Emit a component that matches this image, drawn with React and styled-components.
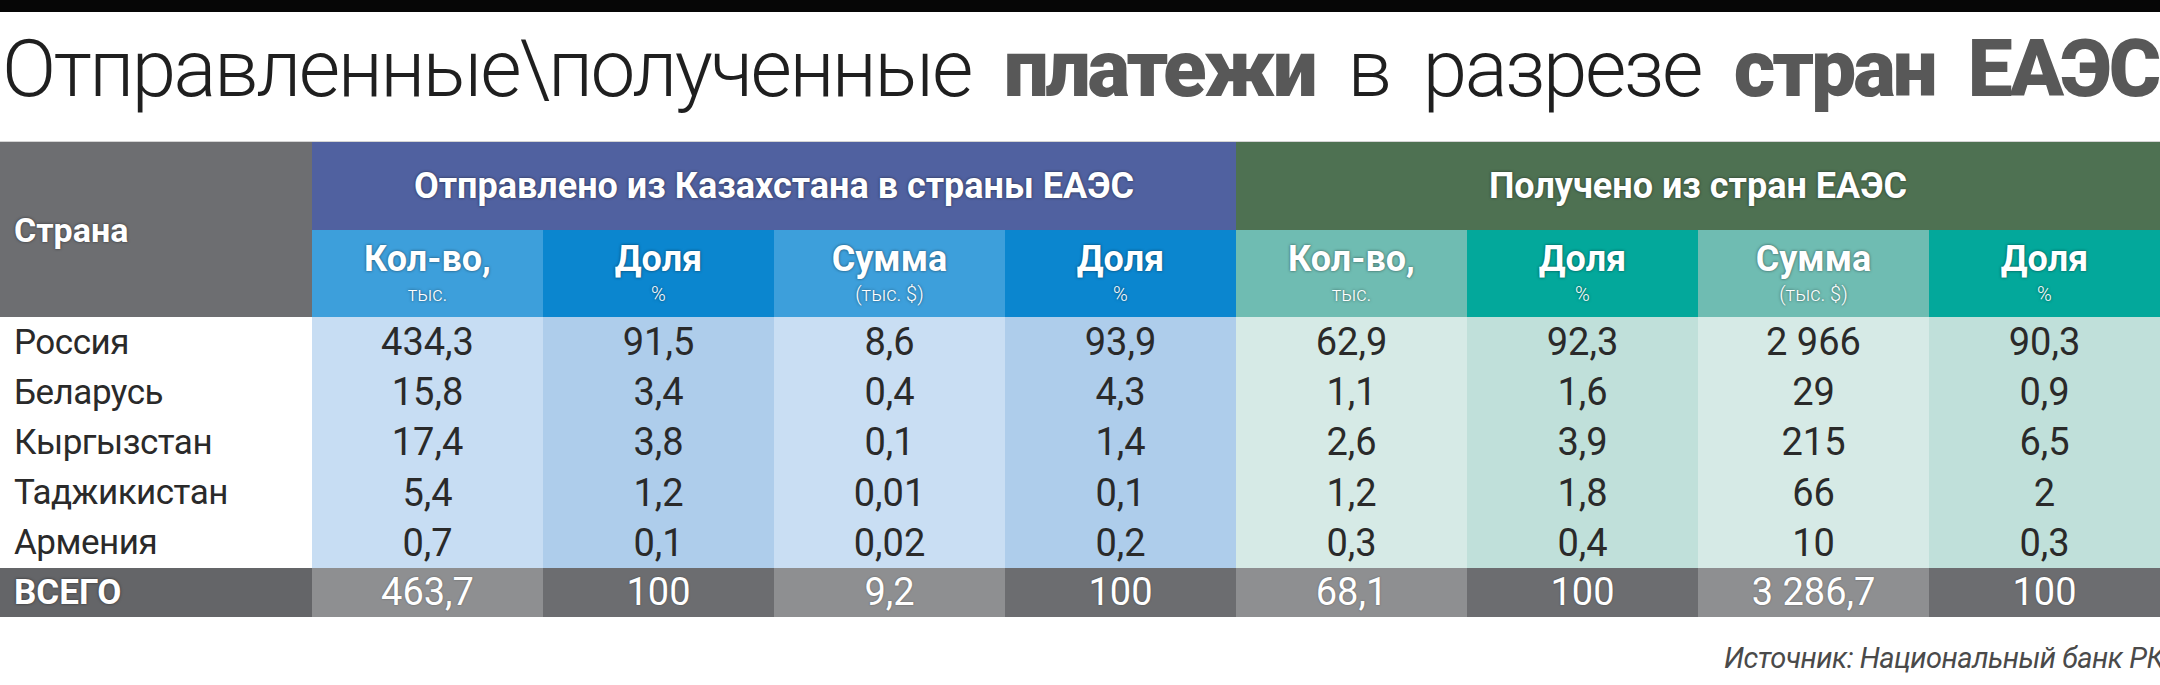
import React from 'react';
import styled, { createGlobalStyle } from 'styled-components';

const GlobalStyle = createGlobalStyle`
  html, body {
    margin: 0;
    padding: 0;
    background: #fff;
  }
  body {
    font-family: Roboto, 'Liberation Sans', sans-serif;
  }
`;

const Page = styled.div`
  width: 2160px;
  height: 685px;
  overflow: hidden;
  background: #fff;
`;

const TopBar = styled.div`
  height: 12px;
  background: #060606;
`;

const Title = styled.h1`
  margin: 0;
  height: 129px;
  box-sizing: border-box;
  padding: 17px 0 0 2px;
  font-size: 80px;
  line-height: 80px;
  font-weight: 300;
  color: #1f1f1f;
  white-space: nowrap;
  word-spacing: 16px;
  letter-spacing: -2.5px;
`;

const Strong = styled.span`
  font-weight: 900;
  color: #585858;
  letter-spacing: -3px;
`;

const Table = styled.div`
  display: grid;
  grid-template-columns: 312px repeat(8, 1fr);
  grid-template-rows: 88px 87px repeat(5, 50.2px) 49px;
  border-top: 1px solid #d4d4d4;
`;

const headText = `
  color: #fff;
  font-weight: 700;
  text-shadow: 0 0 3px rgba(0, 0, 0, 0.55);
`;

const CountryHead = styled.div`
  grid-row: 1 / 3;
  background: #6d6e71;
  display: flex;
  align-items: center;
  padding-left: 14px;
  font-size: 34px;
  ${headText}
`;

const GroupHead = styled.div`
  grid-column: span 4;
  background: ${p => p.$bg};
  display: flex;
  align-items: center;
  justify-content: center;
  font-size: 36px;
  ${headText}
`;

const SubHead = styled.div`
  background: ${p => p.$bg};
  display: flex;
  flex-direction: column;
  align-items: center;
  justify-content: center;
  gap: 5px;
  padding-bottom: 2px;
  ${headText}
`;

const SubLabel = styled.div`
  font-size: 36px;
  line-height: 38px;
`;

const SubUnit = styled.div`
  font-size: 20px;
  line-height: 22px;
  font-weight: 300;
`;

const CountryCell = styled.div`
  display: flex;
  align-items: center;
  padding-left: 14px;
  font-size: 35px;
  color: #2a2a2a;
  letter-spacing: -0.5px;
`;

const ValueCell = styled.div`
  background: ${p => p.$bg};
  display: flex;
  align-items: center;
  justify-content: center;
  font-size: 38px;
  color: #2a2a2a;
`;

const TotalLabel = styled.div`
  background: #646568;
  display: flex;
  align-items: center;
  padding-left: 14px;
  font-size: 35px;
  ${headText}
`;

const TotalCell = styled.div`
  background: ${p => p.$bg};
  display: flex;
  align-items: center;
  justify-content: center;
  font-size: 38px;
  color: #fff;
  text-shadow: 0 0 2px rgba(0, 0, 0, 0.35);
`;

const Footer = styled.div`
  display: flex;
  justify-content: flex-end;
  padding-top: 25px;
`;

const Source = styled.span`
  margin-right: -4px;
  font-size: 29px;
  line-height: 32px;
  font-style: italic;
  color: #4a4a4a;
  letter-spacing: -0.5px;
  white-space: nowrap;
`;

const columns = [
  { label: 'Кол-во,', unit: 'тыс.', head: '#3d9fdb', cell: '#c7ddf3', total: '#8e8f91' },
  { label: 'Доля', unit: '%', head: '#0b86cf', cell: '#aecdeb', total: '#6c6d70' },
  { label: 'Сумма', unit: '(тыс. $)', head: '#3d9fdb', cell: '#c9def3', total: '#8e8f91' },
  { label: 'Доля', unit: '%', head: '#0b86cf', cell: '#aecdeb', total: '#6c6d70' },
  { label: 'Кол-во,', unit: 'тыс.', head: '#6fbcb2', cell: '#d6eae6', total: '#8e8f91' },
  { label: 'Доля', unit: '%', head: '#03a89b', cell: '#c0e0da', total: '#6c6d70' },
  { label: 'Сумма', unit: '(тыс. $)', head: '#6fbcb2', cell: '#d6eae6', total: '#8e8f91' },
  { label: 'Доля', unit: '%', head: '#03a89b', cell: '#c0e0da', total: '#6c6d70' },
];

const rows = [
  ['Россия', '434,3', '91,5', '8,6', '93,9', '62,9', '92,3', '2 966', '90,3'],
  ['Беларусь', '15,8', '3,4', '0,4', '4,3', '1,1', '1,6', '29', '0,9'],
  ['Кыргызстан', '17,4', '3,8', '0,1', '1,4', '2,6', '3,9', '215', '6,5'],
  ['Таджикистан', '5,4', '1,2', '0,01', '0,1', '1,2', '1,8', '66', '2'],
  ['Армения', '0,7', '0,1', '0,02', '0,2', '0,3', '0,4', '10', '0,3'],
];

const totals = ['463,7', '100', '9,2', '100', '68,1', '100', '3 286,7', '100'];

export default function App() {
  return (
    <Page>
      <GlobalStyle />
      <TopBar />
      <Title>
        Отправленные\полученные <Strong>платежи</Strong> в разрезе <Strong>стран ЕАЭС</Strong>
      </Title>

      <Table>
        <CountryHead>Страна</CountryHead>
        <GroupHead $bg="#5061a0">Отправлено из Казахстана в страны ЕАЭС</GroupHead>
        <GroupHead $bg="#4e7152">Получено из стран ЕАЭС</GroupHead>

        {columns.map((c, i) => (
          <SubHead key={'h' + i} $bg={c.head}>
            <SubLabel>{c.label}</SubLabel>
            <SubUnit>{c.unit}</SubUnit>
          </SubHead>
        ))}

        {rows.map(row => (
          <React.Fragment key={row[0]}>
            <CountryCell>{row[0]}</CountryCell>
            {row.slice(1).map((v, i) => (
              <ValueCell key={i} $bg={columns[i].cell}>{v}</ValueCell>
            ))}
          </React.Fragment>
        ))}

        <TotalLabel>ВСЕГО</TotalLabel>
        {totals.map((v, i) => (
          <TotalCell key={'t' + i} $bg={columns[i].total}>{v}</TotalCell>
        ))}
      </Table>

      <Footer>
        <Source>Источник: Национальный банк РК</Source>
      </Footer>
    </Page>
  );
}
